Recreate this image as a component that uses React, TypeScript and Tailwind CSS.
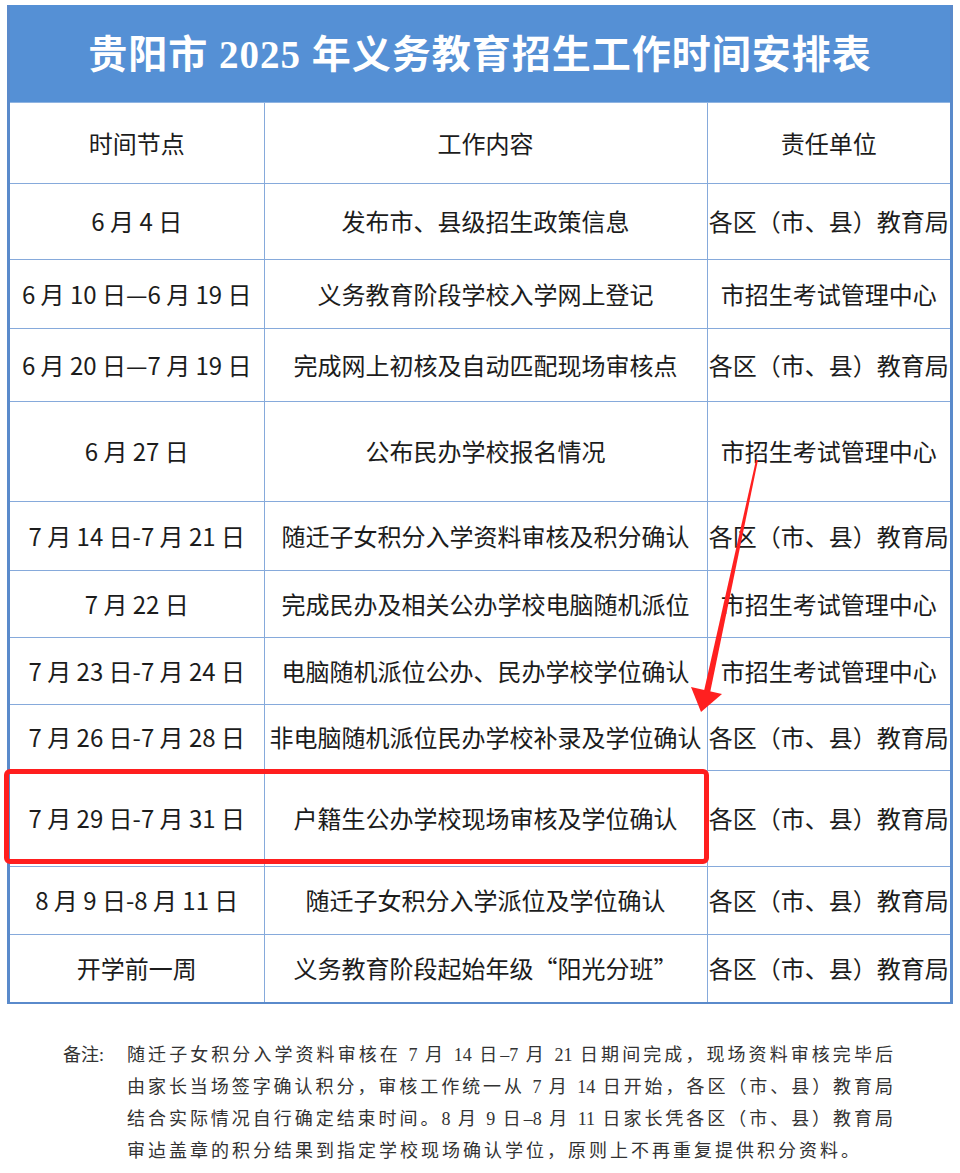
import React from 'react';

const rows = [
  { h: 'h-[76px]', date: '6 月 4 日', work: '发布市、县级招生政策信息', unit: '各区（市、县）教育局' },
  { h: 'h-[69px]', date: '6 月 10 日—6 月 19 日', work: '义务教育阶段学校入学网上登记', unit: '市招生考试管理中心' },
  { h: 'h-[73px]', date: '6 月 20 日—7 月 19 日', work: '完成网上初核及自动匹配现场审核点', unit: '各区（市、县）教育局' },
  { h: 'h-[100px]', date: '6 月 27 日', work: '公布民办学校报名情况', unit: '市招生考试管理中心' },
  { h: 'h-[69px]', date: '7 月 14 日-7 月 21 日', work: '随迁子女积分入学资料审核及积分确认', unit: '各区（市、县）教育局' },
  { h: 'h-[67px]', date: '7 月 22 日', work: '完成民办及相关公办学校电脑随机派位', unit: '市招生考试管理中心' },
  { h: 'h-[67px]', date: '7 月 23 日-7 月 24 日', work: '电脑随机派位公办、民办学校学位确认', unit: '市招生考试管理中心' },
  { h: 'h-[66px]', date: '7 月 26 日-7 月 28 日', work: '非电脑随机派位民办学校补录及学位确认', unit: '各区（市、县）教育局' },
  { h: 'h-[96px]', date: '7 月 29 日-7 月 31 日', work: '户籍生公办学校现场审核及学位确认', unit: '各区（市、县）教育局' },
  { h: 'h-[68px]', date: '8 月 9 日-8 月 11 日', work: '随迁子女积分入学派位及学位确认', unit: '各区（市、县）教育局' },
  { h: 'h-[68px]', date: '开学前一周', work: '义务教育阶段起始年级“阳光分班”', unit: '各区（市、县）教育局' },
];

const cell = 'border border-[#86aadb] text-center align-middle p-0 whitespace-nowrap';

export default function App() {
  return (
    <div className="relative w-[960px] min-h-[1173px] bg-white font-['Noto_Sans_CJK_SC',sans-serif]">
      <div className="pt-[5px] pl-[7px]">
        <div className="w-[946px] border-x-[3px] border-b-[2px] border-[#5a8acb]">
          {/* Title */}
          <div className="h-[98px] bg-[#5590d5] border-b border-[#8fb4e2] flex items-center justify-center pt-[4px]">
            <h1 className="text-white font-bold text-[39px] tracking-[1px] font-['Liberation_Serif','Noto_Sans_CJK_SC',serif]">
              贵阳市 2025 年义务教育招生工作时间安排表
            </h1>
          </div>

          <table className="w-full border-collapse table-fixed text-[24px] text-[#1c1c1c]">
            <colgroup>
              <col className="w-[254px]" />
              <col className="w-[443px]" />
              <col />
            </colgroup>
            <thead>
              <tr className="h-[80px]">
                <th className={`${cell} border-t-0 border-l-0 font-normal`}>时间节点</th>
                <th className={`${cell} border-t-0 font-normal`}>工作内容</th>
                <th className={`${cell} border-t-0 border-r-0 font-normal`}>责任单位</th>
              </tr>
            </thead>
            <tbody>
              {rows.map((r, i) => (
                <tr key={i} className={r.h}>
                  <td className={`${cell} border-l-0 ${i === rows.length - 1 ? 'border-b-0' : ''}`}>{r.date}</td>
                  <td className={`${cell} ${i === rows.length - 1 ? 'border-b-0' : ''}`}>{r.work}</td>
                  <td className={`${cell} border-r-0 ${i === rows.length - 1 ? 'border-b-0' : ''}`}>{r.unit}</td>
                </tr>
              ))}
            </tbody>
          </table>
        </div>
      </div>

      {/* Notes */}
      <div className="flex pt-[35px] pl-[63px] text-[18px] leading-[32px] text-[#333] font-['Liberation_Serif','Noto_Sans_CJK_SC',serif]">
        <div className="w-[64px] shrink-0">备注:</div>
        <div className="w-[766px]">
          <div className="[text-align-last:justify]">随迁子女积分入学资料审核在 7 月 14 日–7 月 21 日期间完成，现场资料审核完毕后</div>
          <div className="[text-align-last:justify]">由家长当场签字确认积分，审核工作统一从 7 月 14 日开始，各区（市、县）教育局</div>
          <div className="[text-align-last:justify]">结合实际情况自行确定结束时间。8 月 9 日–8 月 11 日家长凭各区（市、县）教育局</div>
          <div className="tracking-[3px]">审迠盖章的积分结果到指定学校现场确认学位，原则上不再重复提供积分资料。</div>
        </div>
      </div>

      {/* Red highlight box */}
      <div className="absolute left-[4px] top-[769px] w-[705px] h-[95px] border-[5px] border-[#ff1e1e] rounded-[6px] pointer-events-none" />

      {/* Red arrow */}
      <svg className="absolute left-0 top-0 pointer-events-none" width="960" height="1173" viewBox="0 0 960 1173">
        <polygon points="758,460 756,460 704,691 710,693" fill="#ff2020" />
        <polygon points="701,712 691,687 722,694" fill="#ff2020" />
      </svg>
    </div>
  );
}
